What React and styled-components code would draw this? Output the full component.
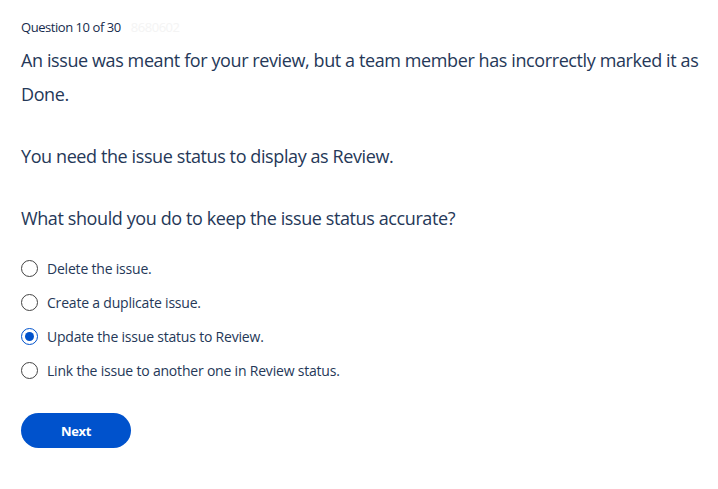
import React, { useState } from "react";
import styled, { createGlobalStyle } from "styled-components";

const Global = createGlobalStyle`
  html, body { margin: 0; padding: 0; background: #fff; }
  body { font-family: "Open Sans", "Noto Sans", sans-serif; color: #172B4D; }
`;

const Page = styled.div`
  padding: 18px 10px 20px 21px;
  display: flex;
  flex-direction: column;
`;

const Header = styled.div`
  display: flex;
  align-items: baseline;
  gap: 10px;
  font-size: 13px;
  letter-spacing: -0.45px;
  color: #172B4D;
  height: 18px;
`;

const Faint = styled.span`
  color: #f4f4f4;
  font-size: 13px;
`;

const Para = styled.p`
  margin: ${(p) => p.$top || 0}px 0 0 0;
  font-size: 18px;
  line-height: 34px;
  letter-spacing: -0.4px;
  color: #253858;
`;

const Options = styled.div`
  margin-top: 16px;
  display: flex;
  flex-direction: column;
`;

const Option = styled.label`
  display: flex;
  align-items: center;
  gap: 9px;
  height: 34px;
  font-size: 14px;
  letter-spacing: -0.2px;
  color: #253858;
  cursor: pointer;
`;

const Radio = styled.span`
  width: 17px;
  height: 17px;
  box-sizing: border-box;
  border-radius: 50%;
  border: 1.5px solid ${(p) => (p.$on ? "#0052CC" : "#444")};
  display: flex;
  align-items: center;
  justify-content: center;
  flex: none;
  &::after {
    content: "";
    width: 9px;
    height: 9px;
    border-radius: 50%;
    background: #0052CC;
    display: ${(p) => (p.$on ? "block" : "none")};
  }
`;

const Button = styled.button`
  margin-top: 26px;
  width: 110px;
  height: 35px;
  border: none;
  border-radius: 18px;
  background: #0052CC;
  color: #fff;
  font-family: "Open Sans", "Noto Sans", sans-serif;
  font-weight: 700;
  font-size: 13px;
  letter-spacing: -0.3px;
`;

const options = [
  "Delete the issue.",
  "Create a duplicate issue.",
  "Update the issue status to Review.",
  "Link the issue to another one in Review status.",
];

export default function App() {
  const [sel, setSel] = useState(2);
  return (
    <>
      <Global />
      <Page>
        <Header>
          <span>Question 10 of 30</span>
          <Faint>8680602</Faint>
        </Header>
        <Para $top={7}>
          An issue was meant for your review, but a team member has incorrectly marked it as Done.
        </Para>
        <Para $top={28}>You need the issue status to display as Review.</Para>
        <Para $top={28}>What should you do to keep the issue status accurate?</Para>
        <Options>
          {options.map((o, i) => (
            <Option key={i} onClick={() => setSel(i)}>
              <Radio $on={sel === i} />
              {o}
            </Option>
          ))}
        </Options>
        <div>
          <Button>Next</Button>
        </div>
      </Page>
    </>
  );
}
